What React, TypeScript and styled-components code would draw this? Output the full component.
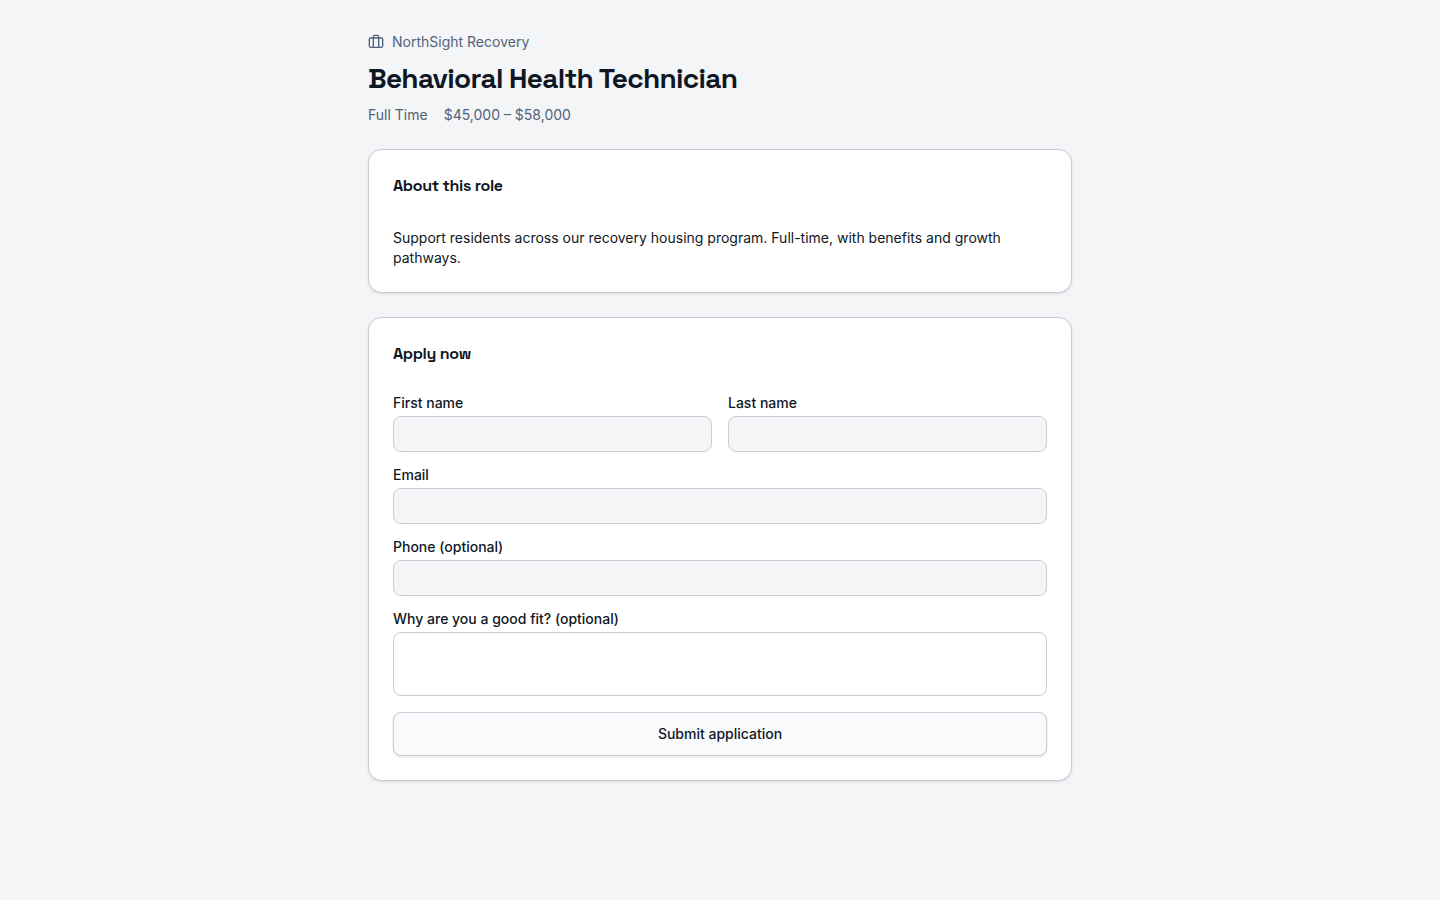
import React from "react";
import styled, { createGlobalStyle } from "styled-components";
import { Briefcase } from "lucide-react";

const GlobalStyle = createGlobalStyle`
  *, *::before, *::after { box-sizing: border-box; }
  body {
    margin: 0;
    min-height: 100vh;
    background: #f3f5f7;
    color: #0f1724;
    font-family: Inter, "Liberation Sans", sans-serif;
    font-size: 14px;
    line-height: 20px;
  }
  h1, h2, p { margin: 0; }
`;

const displayFont = `"Space Grotesk", Inter, sans-serif`;
const line = "#c8ccd9";
const shadow = "0 1px 3px 0 rgba(0, 0, 0, 0.1), 0 1px 2px -1px rgba(0, 0, 0, 0.1)";

const Page = styled.main`
  display: flex;
  flex-direction: column;
  gap: 24px;
  max-width: 768px;
  margin: 0 auto;
  padding: 32px;
`;

const PageHeader = styled.header`
  display: flex;
  flex-direction: column;
  gap: 8px;
`;

const Company = styled.p`
  display: flex;
  align-items: center;
  gap: 8px;
  color: #52627a;
`;

const JobTitle = styled.h1`
  font-family: ${displayFont};
  font-size: 28px;
  line-height: 37px;
  font-weight: 600;
  letter-spacing: -0.025em;
`;

const Meta = styled.div`
  display: flex;
  flex-wrap: wrap;
  gap: 16px;
  color: #52627a;
`;

const Card = styled.section`
  display: flex;
  flex-direction: column;
  gap: 30px;
  padding: 24px;
  background: #fff;
  border: 1px solid ${line};
  border-radius: 14px;
  box-shadow: ${shadow};
`;

const CardTitle = styled.h2`
  font-family: ${displayFont};
  font-size: 16px;
  line-height: 24px;
  font-weight: 600;
  letter-spacing: -0.02em;
`;

const Form = styled.form`
  display: flex;
  flex-direction: column;
  gap: 16px;
`;

const NameRow = styled.div`
  display: grid;
  grid-template-columns: 1fr 1fr;
  gap: 16px;
`;

const Field = styled.div`
  display: flex;
  flex-direction: column;
  gap: 6px;
  min-width: 0;
`;

const Label = styled.label`
  font-weight: 500;
  line-height: 14px;
`;

const Input = styled.input`
  width: 100%;
  height: 36px;
  padding: 4px 12px;
  font: inherit;
  color: inherit;
  background: #f3f5f7;
  border: 1px solid ${line};
  border-radius: 8px;
`;

const TextArea = styled.textarea`
  display: block;
  width: 100%;
  height: 64px;
  padding: 8px 12px;
  font: inherit;
  color: inherit;
  background: #fff;
  border: 1px solid ${line};
  border-radius: 8px;
  resize: none;
`;

const SubmitButton = styled.button`
  height: 44px;
  padding: 8px 16px;
  font: inherit;
  font-weight: 500;
  color: inherit;
  background: #f9fafc;
  border: 1px solid ${line};
  border-radius: 8px;
  box-shadow: ${shadow};
  cursor: pointer;
`;

function TextField({ id, label, type = "text" }: { id: string; label: string; type?: string }) {
  return (
    <Field>
      <Label htmlFor={id}>{label}</Label>
      <Input id={id} name={id} type={type} />
    </Field>
  );
}

export default function App() {
  return (
    <>
      <GlobalStyle />
      <Page>
        <PageHeader>
          <Company>
            <Briefcase size={16} aria-hidden />
            NorthSight Recovery
          </Company>
          <JobTitle>Behavioral Health Technician</JobTitle>
          <Meta>
            <span>Full Time</span>
            <span>$45,000 – $58,000</span>
          </Meta>
        </PageHeader>
        <Card>
          <CardTitle>About this role</CardTitle>
          <p>
            Support residents across our recovery housing program. Full-time, with benefits and growth pathways.
          </p>
        </Card>
        <Card>
          <CardTitle>Apply now</CardTitle>
          <Form onSubmit={(e) => e.preventDefault()}>
            <NameRow>
              <TextField id="firstName" label="First name" />
              <TextField id="lastName" label="Last name" />
            </NameRow>
            <TextField id="email" label="Email" type="email" />
            <TextField id="phone" label="Phone (optional)" type="tel" />
            <Field>
              <Label htmlFor="fit">Why are you a good fit? (optional)</Label>
              <TextArea id="fit" name="fit" />
            </Field>
            <SubmitButton type="submit">Submit application</SubmitButton>
          </Form>
        </Card>
      </Page>
    </>
  );
}
